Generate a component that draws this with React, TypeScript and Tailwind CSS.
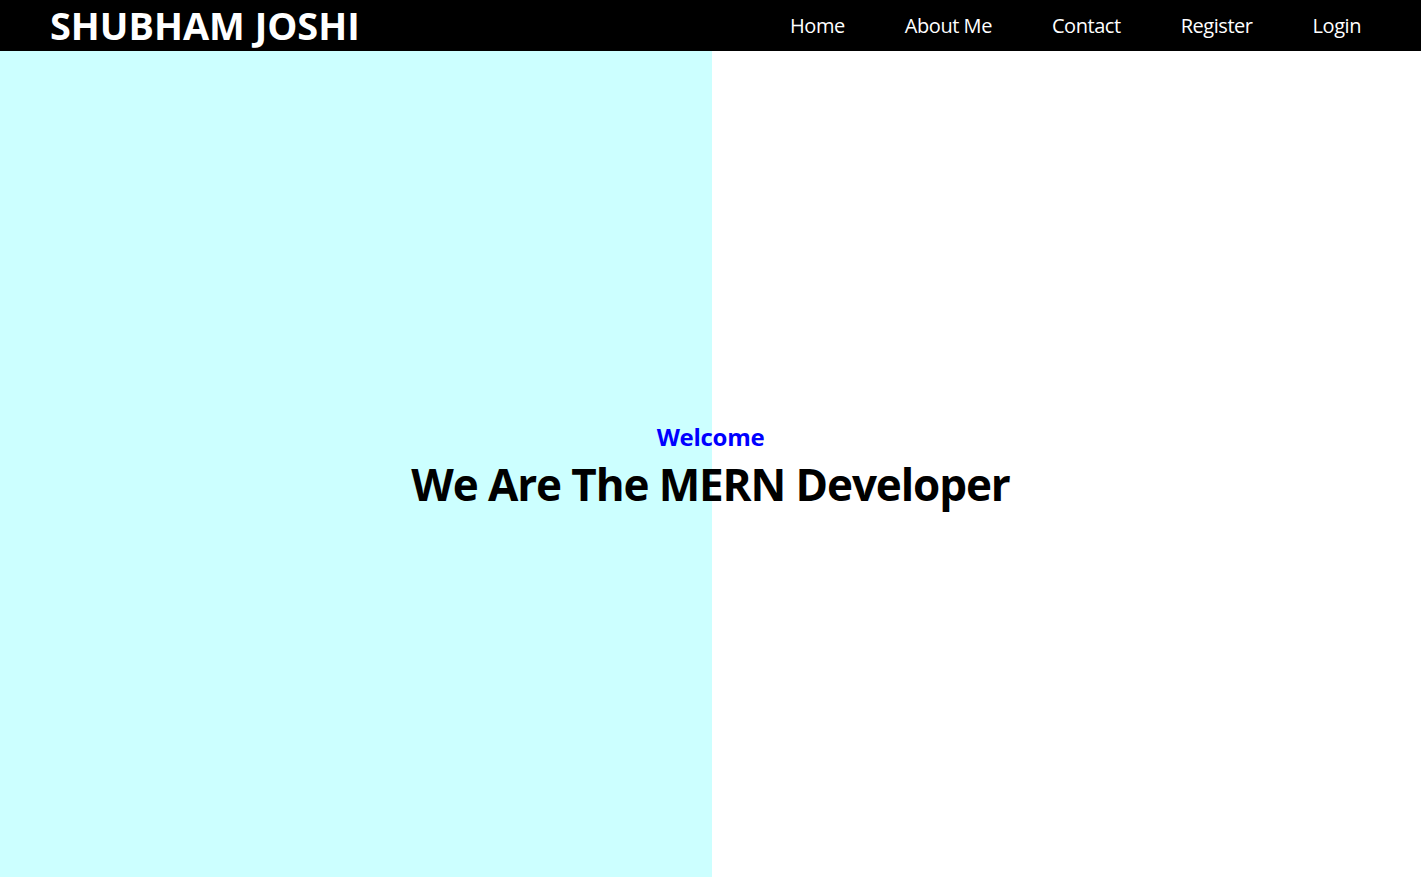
import React from "react";

const links = ["Home", "About Me", "Contact", "Register", "Login"];

export default function App() {
  return (
    <div className="h-[878px] w-full overflow-hidden bg-white font-['Open_Sans',sans-serif]">
      {/* Navbar */}
      <nav className="flex h-[51px] items-center justify-between bg-black pl-[50px] pr-[30px]">
        <div className="text-[37.9px] font-bold leading-none text-white">SHUBHAM JOSHI</div>
        <ul className="flex items-center">
          {links.map((l) => (
            <li key={l} className="px-[30px] pt-[1px] text-[20px] leading-none tracking-[-0.45px] text-white">
              {l}
            </li>
          ))}
        </ul>
      </nav>

      {/* Hero */}
      <section className="relative flex h-[826px]">
        <div className="h-full w-[712px] bg-[#ccffff]" />
        <div className="absolute inset-0 flex flex-col items-center justify-center pt-[5px]">
          <p className="mb-[5px] text-[24px] font-bold leading-tight tracking-[-0.3px] text-[#0000ff]">Welcome</p>
          <h1 className="text-[44px] font-bold leading-tight tracking-[-1.1px] text-black">
            We Are The MERN Developer
          </h1>
        </div>
      </section>
    </div>
  );
}
